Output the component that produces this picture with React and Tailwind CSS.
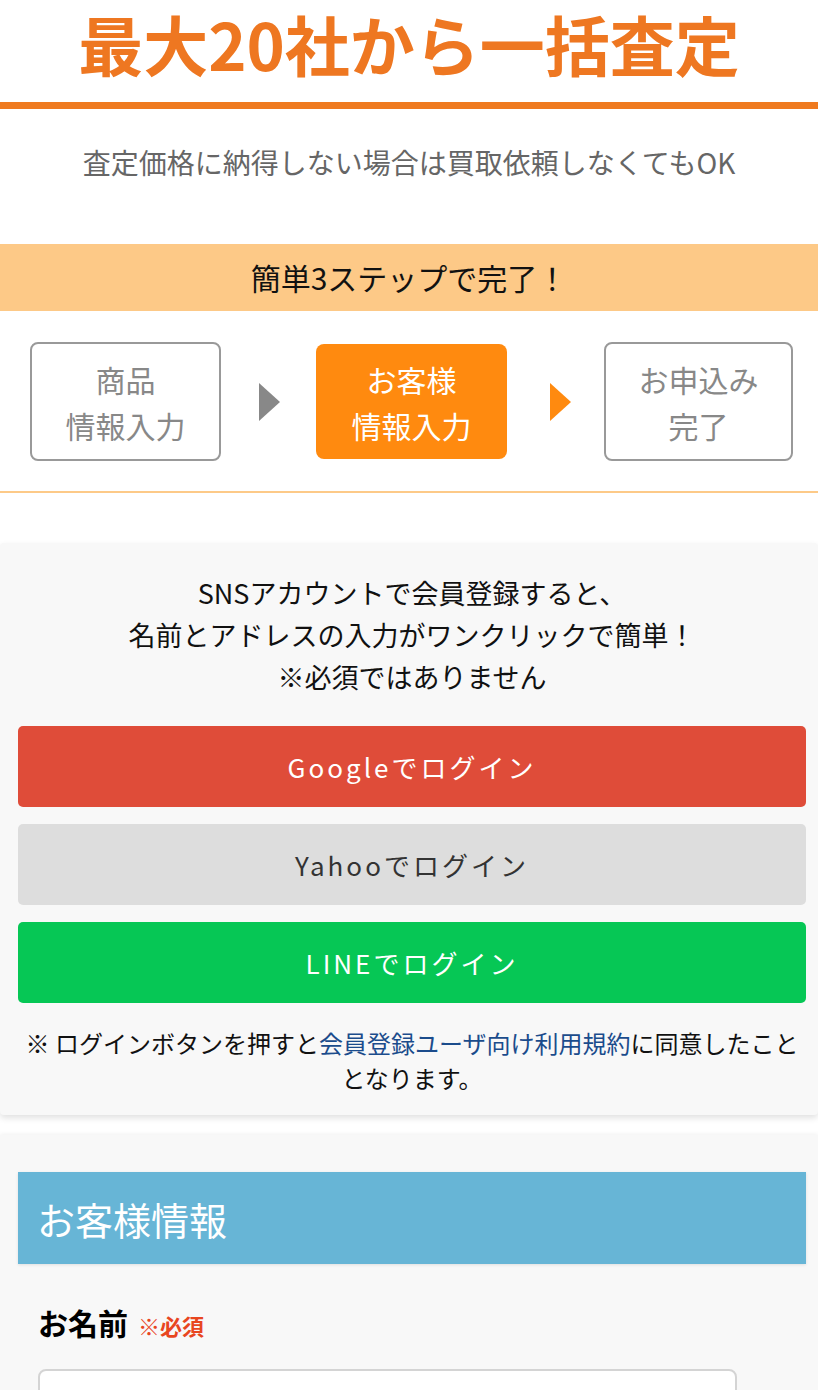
export default function App() {
    const steps = [
        { lines: ['商品', '情報入力'], active: false },
        { lines: ['お客様', '情報入力'], active: true },
        { lines: ['お申込み', '完了'], active: false },
    ];

    return (
        <div className="w-[818px] bg-white text-black font-['Noto_Sans_CJK_JP',sans-serif]">
            {/* Heading */}
            <div className="pt-[3px] pb-[19px] text-center">
                <h1 className="text-[65px] leading-[80px] font-bold text-[#ee7721]">最大20社から一括査定</h1>
            </div>
            <div className="h-[7px] bg-[#ef7a1f]" />
            <p className="mt-[32px] text-center text-[28px] leading-[42px] text-[#666]">
                査定価格に納得しない場合は買取依頼しなくてもOK
            </p>

            {/* Steps */}
            <div className="mt-[61px] h-[67px] bg-[#fdc987] flex items-center justify-center">
                <span className="text-[30px] text-[#111]">簡単3ステップで完了！</span>
            </div>
            <div className="pt-[31px] pb-[30px] pl-[30px] flex items-center border-b-2 border-[#fdca88]">
                <div className="w-[191px] h-[119px] rounded-[8px] border-2 border-[#999] text-[#888] flex flex-col items-center justify-center text-[30px] leading-[46px]">
                    {steps[0].lines.map(l => <span key={l}>{l}</span>)}
                </div>
                <svg className="ml-[38px] mr-[36px]" width="21" height="38" viewBox="0 0 21 38">
                    <path d="M0 0 L21 19 L0 38 Z" fill="#888888" />
                </svg>
                <div className="w-[191px] h-[115px] rounded-[8px] bg-[#ff8a0f] text-white flex flex-col items-center justify-center text-[30px] leading-[46px]">
                    {steps[1].lines.map(l => <span key={l}>{l}</span>)}
                </div>
                <svg className="ml-[43px] mr-[33px]" width="21" height="38" viewBox="0 0 21 38">
                    <path d="M0 0 L21 19 L0 38 Z" fill="#ff8a0f" />
                </svg>
                <div className="w-[189px] h-[119px] rounded-[8px] border-2 border-[#999] text-[#888] flex flex-col items-center justify-center text-[30px] leading-[46px]">
                    {steps[2].lines.map(l => <span key={l}>{l}</span>)}
                </div>
            </div>

            {/* SNS login */}
            <div className="mt-[50px] bg-[#f8f8f8] rounded-[4px] shadow-[0_3px_6px_rgba(0,0,0,0.12)] pl-[18px] pr-[12px] pt-[29px] pb-[20px]">
                <p className="text-center text-[27px] leading-[42px] text-[#111]">
                    SNSアカウントで会員登録すると、<br />
                    名前とアドレスの入力がワンクリックで簡単！<br />
                    ※必須ではありません
                </p>
                <div className="mt-[28px] flex flex-col gap-[17px]">
                    <button className="h-[81px] rounded-[5px] bg-[#df4c39] text-white text-[26px] tracking-[3px]">Googleでログイン</button>
                    <button className="h-[81px] rounded-[5px] bg-[#dddddd] text-[#333] text-[26px] tracking-[3px]">Yahooでログイン</button>
                    <button className="h-[81px] rounded-[5px] bg-[#06c755] text-white text-[26px] tracking-[3px]">LINEでログイン</button>
                </div>
                <p className="mt-[22px] text-center text-[24px] leading-[35px] text-[#111]">
                    ※ ログインボタンを押すと<a className="text-[#1b4c8c]">会員登録ユーザ向け利用規約</a>に同意したこと<br />
                    となります。
                </p>
            </div>

            {/* Customer info */}
            <div className="mt-[20px] bg-[#f8f8f8] shadow-[0_-1px_4px_rgba(0,0,0,0.06)] pl-[18px] pr-[12px] pt-[37px] pb-[40px]">
                <div className="bg-[#67b5d6] h-[92px] flex items-center px-[19px] shadow-[0_1px_3px_rgba(0,0,0,0.1)]">
                    <h2 className="text-[38px] text-white">お客様情報</h2>
                </div>
                <div className="px-[20px] pt-[36px]">
                    <div className="flex items-baseline gap-[10px]">
                        <span className="text-[30px] font-bold">お名前</span>
                        <span className="text-[22px] font-bold text-[#e8461f]">※必須</span>
                    </div>
                    <div className="mt-[24px] w-[699px] h-[60px] bg-white border-2 border-[#d4d4d4] rounded-[8px]" />
                </div>
            </div>
        </div>
    );
}
